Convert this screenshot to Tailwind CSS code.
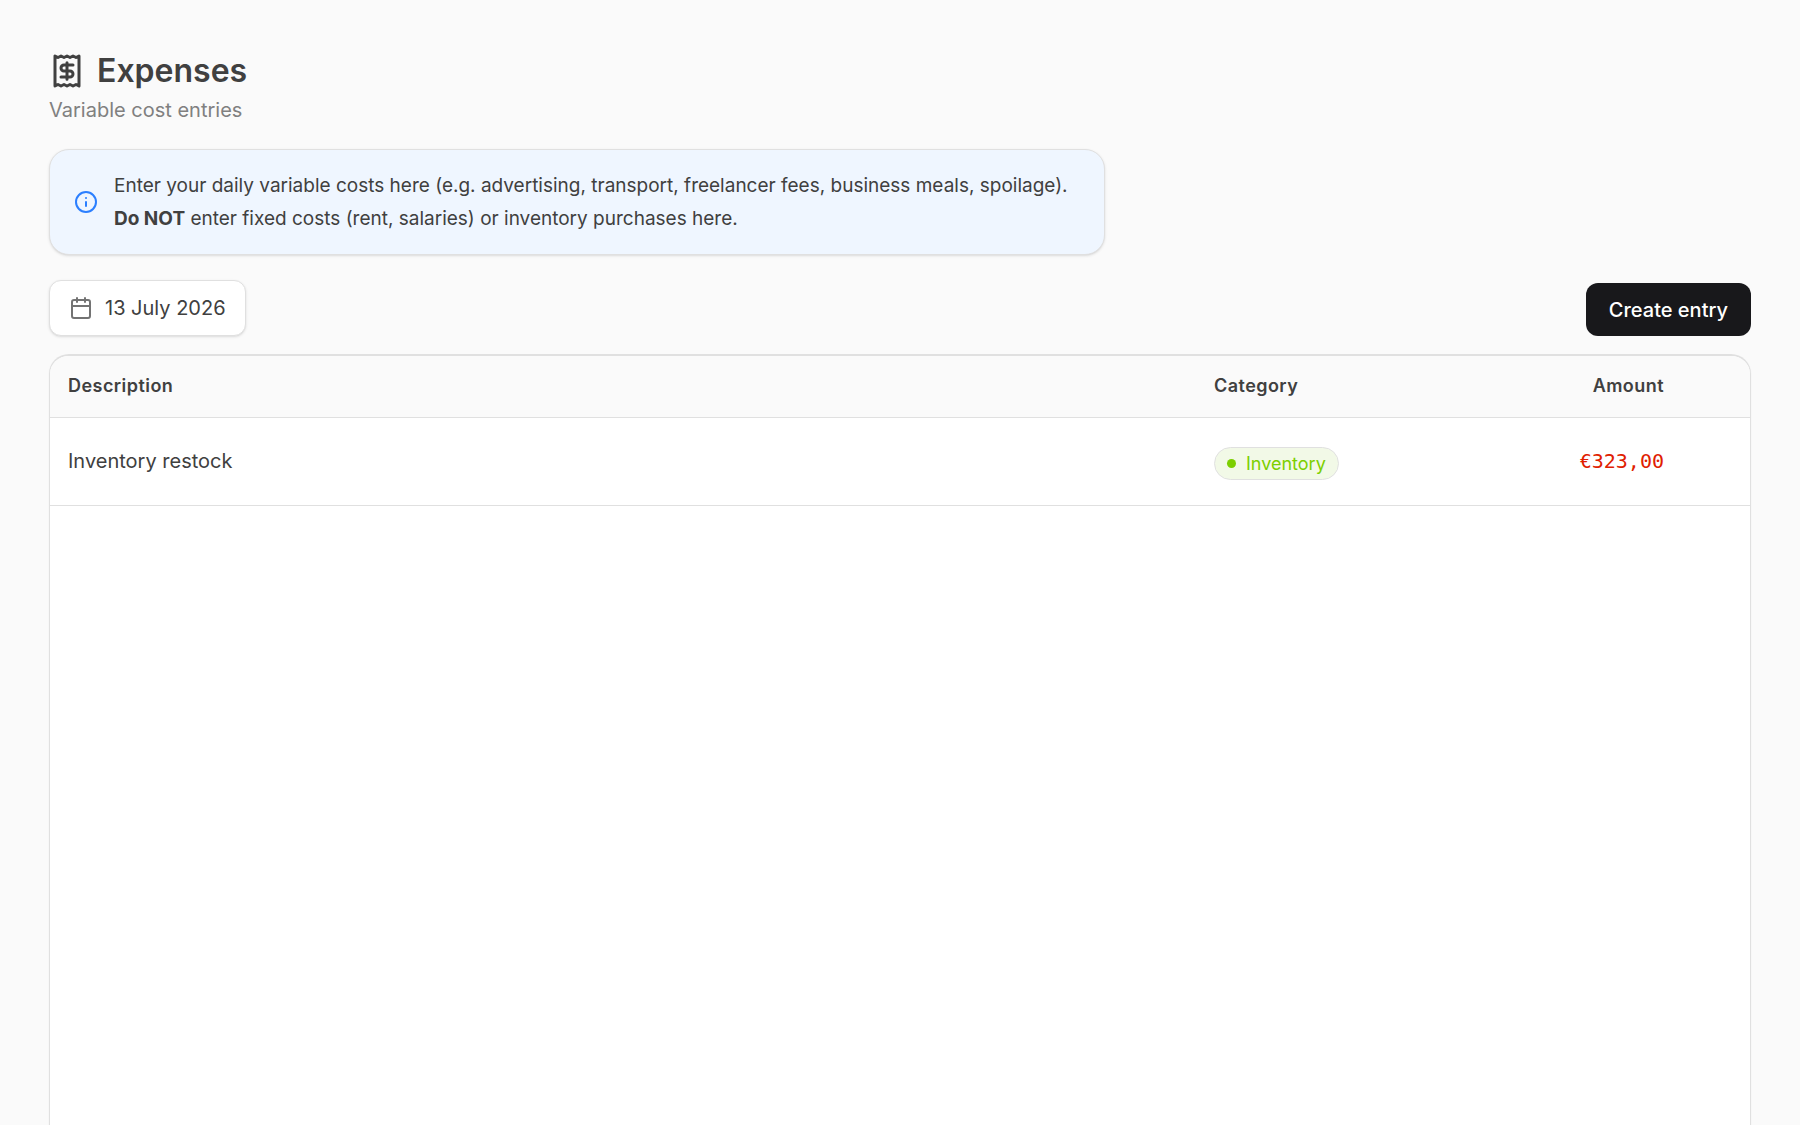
<!DOCTYPE html>
<html lang="en">
<head>
  <meta charset="UTF-8">
  <title>Expenses</title>
  <script src="https://cdn.jsdelivr.net/npm/@tailwindcss/browser@4"></script>
  <meta name="viewport" content="width=device-width, initial-scale=1.0">
</head>
<body class="bg-[#fafafa] text-[#404040] font-[Inter,sans-serif] text-xl h-screen overflow-hidden">

  <main class="flex h-full flex-col px-[49px] pt-12">
    <header>
      <div class="flex items-center gap-3">
        <svg class="size-9" viewBox="0 0 24 24" fill="none" stroke="currentColor" stroke-width="2" stroke-linecap="round" stroke-linejoin="round" aria-hidden="true">
          <path d="M4 2v20l2-1 2 1 2-1 2 1 2-1 2 1 2-1 2 1V2l-2 1-2-1-2 1-2-1-2 1-2-1-2 1z" />
          <path d="M16 8h-6a2 2 0 1 0 0 4h4a2 2 0 1 1 0 4H8M12 17.5v-11" />
        </svg>
        <h1 class="text-[32px] leading-[46px] font-semibold">Expenses</h1>
      </div>
      <p class="leading-8 text-[#808080]">Variable cost entries</p>
    </header>

    <div class="mt-[23px] flex w-fit items-center gap-4 rounded-[20px] border border-[#e0e0e0] bg-[#eff6ff] px-6 py-[19px] shadow-sm">
      <svg class="size-6 shrink-0 text-[#2b7fff]" viewBox="0 0 24 24" fill="none" stroke="currentColor" stroke-width="2" stroke-linecap="round" aria-hidden="true">
        <circle cx="12" cy="12" r="10" />
        <path d="M12 16v-4M12 8h.01" />
      </svg>
      <p class="pr-3 text-[19px] leading-[33px]">Enter your daily variable costs here (e.g. advertising, transport, freelancer fees, business meals, spoilage).<br><strong>Do NOT</strong> enter fixed costs (rent, salaries) or inventory purchases here.</p>
    </div>

    <div class="mt-[25px] flex items-end justify-between">
      <button type="button" class="flex h-14 items-center gap-3 rounded-xl border border-[#e0e0e0] bg-white px-[19px] shadow-sm">
        <svg class="size-6 text-[#737373]" viewBox="0 0 24 24" fill="none" stroke="currentColor" stroke-width="2" stroke-linecap="round" stroke-linejoin="round" aria-hidden="true">
          <rect x="3" y="4" width="18" height="18" rx="2" />
          <path d="M8 2v4M16 2v4M3 10h18" />
        </svg>
        13 July 2026
      </button>
      <button type="button" class="h-[53px] rounded-xl bg-[#18181b] px-[23px] font-medium text-white">Create entry</button>
    </div>

    <div class="mt-[18px] flex-1 overflow-hidden rounded-t-[20px] border border-t-2 border-b-0 border-[#e0e0e0] bg-white shadow-xs">
      <table class="w-full table-fixed">
        <thead class="bg-[#fafafa] text-lg">
          <tr class="h-[61px] border-b border-[#e0e0e0] text-left">
            <th class="px-[18px] font-semibold tracking-wide">Description</th>
            <th class="w-[18%] px-[18px] font-semibold tracking-wide">Category</th>
            <th class="w-[180px] pr-[18px] text-right font-semibold tracking-wide">Amount</th>
            <th class="w-17"></th>
          </tr>
        </thead>
        <tbody>
          <tr class="h-[88px] border-b border-[#e0e0e0]">
            <td class="px-[18px]">Inventory restock</td>
            <td class="px-[18px] pt-1">
              <span class="flex w-fit items-center gap-2.5 rounded-full border border-[#e0e0e0] bg-[#f2f9e7] px-3 text-lg leading-[31px] text-[#7ccf00]">
                <span class="size-[9px] rounded-full bg-[#7ccf00]"></span>Inventory
              </span>
            </td>
            <td class="pr-[18px] text-right font-['DejaVu_Sans_Mono',monospace] text-[#e02000]">€323,00</td>
            <td></td>
          </tr>
        </tbody>
      </table>
    </div>
  </main>

</body>
</html>
